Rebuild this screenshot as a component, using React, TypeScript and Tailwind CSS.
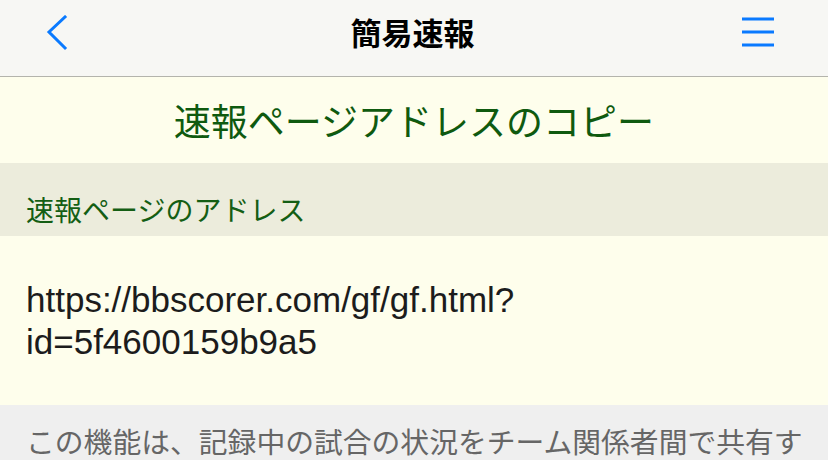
import { useState } from 'react'

const jp = { fontFamily: '"Noto Sans CJK JP", "Noto Sans", sans-serif' }

function BackIcon() {
    return (
        <svg width="22" height="36" viewBox="0 0 22 36" fill="none">
            <path d="M19 2 L3 17 L19 33" stroke="#0a7aff" strokeWidth="3" strokeLinecap="square" />
        </svg>
    )
}

function MenuIcon() {
    return (
        <svg width="34" height="32" viewBox="0 0 34 32" fill="none">
            <path d="M1 3 H33 M1 16 H33 M1 29 H33" stroke="#0a7aff" strokeWidth="3" />
        </svg>
    )
}

export default function App() {
    const [url] = useState('https://bbscorer.com/gf/gf.html?id=5f4600159b9a5')
    const [base, query] = url.split('?')

    return (
        <div className="w-[828px] h-[460px] overflow-hidden bg-[#fefeec]" style={jp}>
            <header className="h-[77px] grid grid-cols-[1fr_auto_1fr] items-center pl-[46px] pr-[53px] bg-[#f7f7f4] border-b border-[#b4b4ac]">
                <button className="flex items-center justify-self-start -mt-[10px]">
                    <BackIcon />
                </button>
                <h1 className="text-[31px] leading-none font-bold text-black -mt-[14px] ml-[4px]">簡易速報</h1>
                <button className="flex items-center justify-self-end -mt-[12px]">
                    <MenuIcon />
                </button>
            </header>

            <div className="h-[86px] flex items-center justify-center bg-[#fefeec]">
                <h2 className="text-[37px] leading-none text-[#0f5a0f] font-normal">速報ページアドレスのコピー</h2>
            </div>

            <div className="h-[73px] flex items-center px-[26px] bg-[#ececdc]">
                <span className="text-[28px] leading-none text-[#145e14] pt-[18px]">速報ページのアドレス</span>
            </div>

            <div className="h-[169px] flex flex-col justify-center px-[26px] bg-[#fefeec]">
                <p className="text-[35px] leading-[42px] text-[#1c1c1c] whitespace-nowrap" style={{ fontFamily: '"Liberation Sans", Arial, sans-serif' }}>
                    {base}?
                    <br />
                    {query}
                </p>
            </div>

            <div className="h-[60px] px-[26px] pt-[22px] bg-[#efefef]">
                <p className="text-[28.8px] leading-none text-[#666] whitespace-nowrap">この機能は、記録中の試合の状況をチーム関係者間で共有す</p>
            </div>
        </div>
    )
}
